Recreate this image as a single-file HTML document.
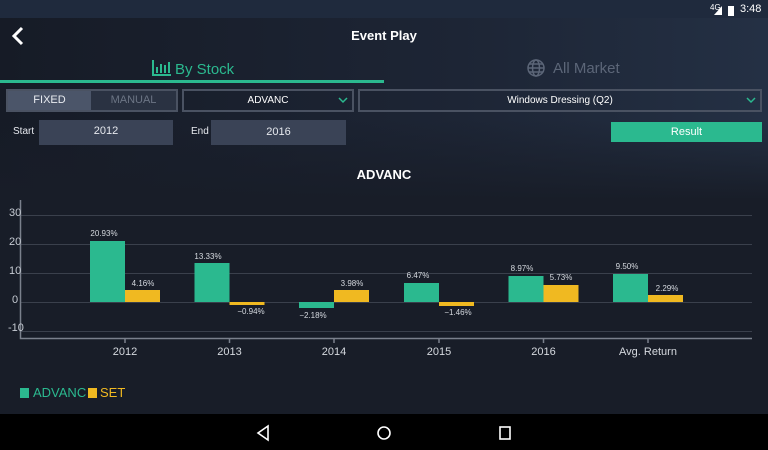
<!DOCTYPE html>
<html><head><meta charset="utf-8"><style>
*{margin:0;padding:0;box-sizing:border-box}
body{width:768px;height:450px;overflow:hidden;background:#181d28;font-family:"Liberation Sans",sans-serif;position:relative;color:#fff}
.top{position:absolute;left:0;top:0;width:768px;height:200px;background:linear-gradient(90deg,#161b26 0%,#1d2535 60%,#243044 100%)}
.fade{position:absolute;left:0;top:120px;width:768px;height:80px;background:linear-gradient(180deg,rgba(24,29,40,0),#181d28)}
.status{position:absolute;left:0;top:0;width:768px;height:18px;background:#1f2a3d}
.abs{position:absolute}
.box{position:absolute;border:2px solid #4a5262;}
.field{position:absolute;background:#3a4356;color:#e6e9ee;font-size:11px;text-align:center}
</style></head><body>
<div class="top"></div>
<div class="fade"></div>
<div class="status"></div>
<div class="abs" style="left:710px;top:3px;font-size:8px;color:#fff">4G</div>
<svg class="abs" style="left:712px;top:4px" width="40" height="12"><polygon points="2,11 10,2 10,11" fill="#fff"/><rect x="16" y="2" width="6" height="10" fill="#fff"/></svg>
<div class="abs" style="left:740px;top:3px;font-size:11px;color:#fff">3:48</div>
<svg class="abs" style="left:8px;top:25px" width="20" height="22"><path d="M14 3 L6 11 L14 19" stroke="#fff" stroke-width="3" fill="none"/></svg>
<div class="abs" style="left:0;width:768px;top:28px;text-align:center;font-size:13px;font-weight:bold">Event Play</div>
<svg class="abs" style="left:152px;top:59px" width="20" height="18"><g stroke="#2bb98f" stroke-width="2" fill="none"><path d="M1 1V16H19"/><path d="M5 14V8M9 14V5M13 14V6M17 14V3"/></g></svg>
<div class="abs" style="left:175px;top:61px;font-size:15px;color:#2bb98f">By Stock</div>
<svg class="abs" style="left:526px;top:58px" width="20" height="20"><g stroke="#5c6678" stroke-width="1.5" fill="none"><circle cx="10" cy="10" r="8"/><ellipse cx="10" cy="10" rx="3.5" ry="8"/><path d="M2 10H18M3.5 6H16.5M3.5 14H16.5"/></g></svg>
<div class="abs" style="left:553px;top:60px;font-size:15px;color:#5c6678">All Market</div>
<div class="abs" style="left:0;top:80px;width:384px;height:3px;background:#2bb98f"></div>
<div class="box" style="left:6px;top:89px;width:172px;height:23px;background:#2a3242"></div>
<div class="abs" style="left:8px;top:91px;width:83px;height:19px;background:#4b5569;color:#e8ebf0;font-size:11px;text-align:center;line-height:19px">FIXED</div>
<div class="abs" style="left:91px;top:91px;width:85px;height:19px;color:#6c7585;font-size:11px;text-align:center;line-height:19px">MANUAL</div>
<div class="box" style="left:182px;top:89px;width:172px;height:23px;font-size:10px;text-align:center;line-height:19px;color:#fff">ADVANC<svg style="position:absolute;right:4px;top:6px" width="10" height="7"><path d="M1 1L5 5L9 1" stroke="#2bb98f" stroke-width="1.5" fill="none"/></svg></div>
<div class="box" style="left:358px;top:89px;width:404px;height:23px;font-size:10px;text-align:center;line-height:19px;color:#fff">Windows Dressing (Q2)<svg style="position:absolute;right:4px;top:6px" width="10" height="7"><path d="M1 1L5 5L9 1" stroke="#2bb98f" stroke-width="1.5" fill="none"/></svg></div>
<div class="abs" style="left:13px;top:126px;font-size:10px;color:#e6e9ee">Start</div>
<div class="field" style="left:39px;top:120px;width:134px;height:25px;line-height:22px">2012</div>
<div class="abs" style="left:191px;top:126px;font-size:10px;color:#e6e9ee">End</div>
<div class="field" style="left:211px;top:120px;width:135px;height:25px;line-height:25px">2016</div>
<div class="abs" style="left:611px;top:122px;width:151px;height:20px;background:#2bb98f;font-size:11px;text-align:center;line-height:20px">Result</div>
<div class="abs" style="left:0;width:768px;top:167px;text-align:center;font-size:13px;font-weight:bold">ADVANC</div>
<svg class="abs" style="left:0;top:195px" width="768" height="170" font-family="Liberation Sans" >
<g transform="translate(0,-195)">
<g stroke="#3a404c" stroke-width="1"><path d="M20 215.5H752M20 244.5H752M20 273.5H752M20 302.5H752M20 331.5H752"/></g>
<g stroke="#7a808c" stroke-width="1.5" fill="none"><path d="M20.5 200V338.5H752"/><path d="M125 338V343M229.5 338V343M334 338V343M439 338V343M543.5 338V343M648 338V343"/></g>
<g fill="#c5cad2" font-size="11"><text x="9" y="216">30</text><text x="9" y="245">20</text><text x="9" y="274">10</text><text x="12" y="303">0</text><text x="8" y="331">-10</text></g>
<g fill="#2bb98f"><rect x="90" y="241" width="35" height="61"/><rect x="194.5" y="263" width="35" height="39"/><rect x="299" y="302" width="35" height="6"/><rect x="404" y="283" width="35" height="19"/><rect x="508.5" y="276" width="35" height="26"/><rect x="613" y="274" width="35" height="28"/></g>
<g fill="#f0b921"><rect x="125" y="290" width="35" height="12"/><rect x="229.5" y="302" width="35" height="3"/><rect x="334" y="290" width="35" height="12"/><rect x="439" y="302" width="35" height="4"/><rect x="543.5" y="285" width="35" height="17"/><rect x="648" y="295" width="35" height="7"/></g>
<g fill="#d5d9df" font-size="8" text-anchor="middle"><text x="104" y="236">20.93%</text><text x="143" y="286">4.16%</text><text x="208" y="259">13.33%</text><text x="251" y="314">−0.94%</text><text x="313" y="318">−2.18%</text><text x="352" y="286">3.98%</text><text x="418" y="278">6.47%</text><text x="458" y="315">−1.46%</text><text x="522" y="271">8.97%</text><text x="561" y="280">5.73%</text><text x="627" y="269">9.50%</text><text x="667" y="291">2.29%</text></g>
<g fill="#d5d9df" font-size="11" text-anchor="middle"><text x="125" y="355">2012</text><text x="229.5" y="355">2013</text><text x="334" y="355">2014</text><text x="439" y="355">2015</text><text x="543.5" y="355">2016</text><text x="648" y="355">Avg. Return</text></g>
</g></svg>
<div class="abs" style="left:20px;top:388px;width:9px;height:10px;background:#2bb98f"></div>
<div class="abs" style="left:33px;top:385px;font-size:13px;color:#2bb98f">ADVANC</div>
<div class="abs" style="left:88px;top:388px;width:9px;height:10px;background:#f0b921"></div>
<div class="abs" style="left:100px;top:385px;font-size:13px;color:#f0b921">SET</div>
<div class="abs" style="left:0;top:414px;width:768px;height:36px;background:#000"></div>
<svg class="abs" style="left:250px;top:422px" width="270" height="22"><g stroke="#fff" stroke-width="1.6" fill="none"><path d="M18 4L8 11L18 18Z"/><circle cx="134" cy="11" r="6"/><rect x="250" y="5" width="10" height="12"/></g></svg>
</body></html>
